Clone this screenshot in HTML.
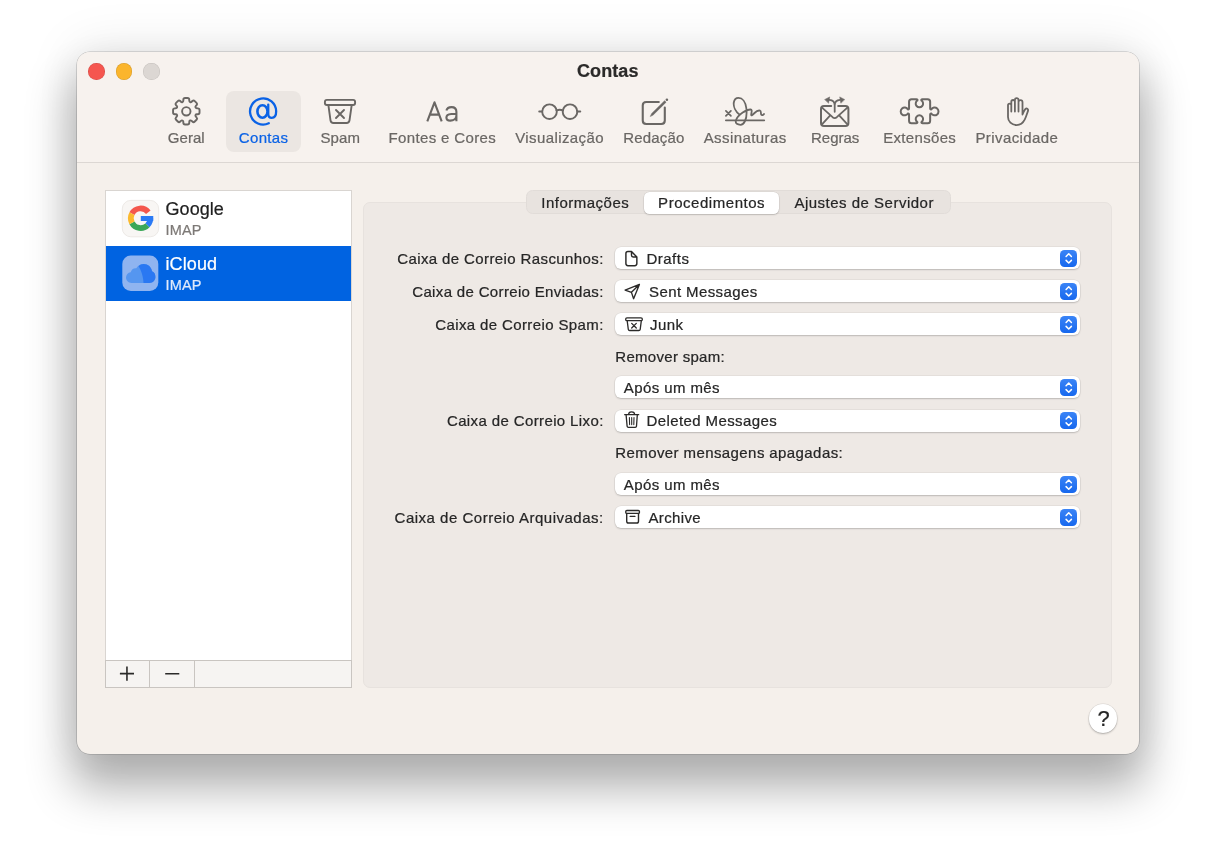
<!DOCTYPE html>
<html lang="pt">
<head>
<meta charset="utf-8">
<title>Contas</title>
<style>
html,body{margin:0;padding:0;}
body{width:1216px;height:856px;overflow:hidden;background:#fff;position:relative;
  font-family:"Liberation Sans",sans-serif;color:#262626;}
*{box-sizing:border-box;}
.abs{position:absolute;}
.t{position:absolute;white-space:nowrap;font-size:15px;line-height:20px;height:20px;-webkit-text-stroke:.22px currentColor;}
/* window */
#win{will-change:transform;position:absolute;left:77px;top:52px;width:1062px;height:702px;border-radius:13px;
  background:#f5f0eb;
  box-shadow:0 0 0 .6px rgba(0,0,0,.24),0 29px 45px 6px rgba(0,0,0,.30),0 -4px 50px 4px rgba(0,0,0,.08);}
#tb{position:absolute;left:0;top:0;width:100%;height:111px;background:#f7f2ee;
  border-radius:13px 13px 0 0;border-bottom:1px solid #dcd7d3;}
.dot{position:absolute;top:11px;width:16.5px;height:16.5px;border-radius:50%;}
#title{left:500px;top:6.5px;font-size:18px;font-weight:bold;color:#2b2a29;letter-spacing:.08px;line-height:24px;height:24px;}
.tl{color:#6a6764;top:76px;transform:translateX(-50%);}
#sel{position:absolute;left:149px;top:39px;width:75px;height:61px;border-radius:8px;background:#ebe6e2;}
/* sidebar */
#list{position:absolute;left:28px;top:138px;width:247px;height:498px;background:#fff;border:1px solid #d9d5d1;}
#row2{position:absolute;left:0;top:55px;width:245px;height:55px;background:#0063e1;}
.an{font-size:18px;line-height:22px;height:22px;left:59.5px;}
.as{font-size:14.5px;line-height:18px;height:18px;left:59.5px;letter-spacing:.19px;}
/* group */
#grp{position:absolute;left:286px;top:150px;width:749px;height:486px;border-radius:7px;background:#eee9e5;border:1px solid #e7e2de;}
#seg{position:absolute;left:448.5px;top:138.25px;width:425px;height:24px;border-radius:6.5px;background:#e8e3df;border:1px solid #e1dcd8;}
#segsel{position:absolute;left:566.5px;top:139.5px;width:135px;height:22.5px;border-radius:5.5px;background:#fff;
  box-shadow:0 0 0 .5px rgba(0,0,0,.08),0 1px 1.5px rgba(0,0,0,.18);}
.pop{position:absolute;left:538px;width:465px;height:22px;border-radius:6px;background:#fff;
  box-shadow:0 0 0 .5px rgba(0,0,0,.07),0 1px 1.8px rgba(0,0,0,.18);}
.pop .t{top:1.5px;}
.step{position:absolute;right:3px;top:2.75px;width:16.6px;height:17px;border-radius:4.5px;
  background:linear-gradient(#3a84f6,#1768ee);}
.lab{text-align:right;}
</style>
</head>
<body>
<div id="win">
  <div id="tb">
    <div class="dot" style="left:11px;background:#f5564f;box-shadow:inset 0 0 0 .5px rgba(0,0,0,.15)"></div>
    <div class="dot" style="left:38.5px;background:#fbb52c;box-shadow:inset 0 0 0 .5px rgba(0,0,0,.15)"></div>
    <div class="dot" style="left:66px;background:#dcd7d3;box-shadow:inset 0 0 0 .5px rgba(0,0,0,.12)"></div>
    <div class="t" id="title">Contas</div>
    <div id="sel"></div>
    <svg class="abs" style="left:-77px;top:-52px" width="1216" height="200" viewBox="0 0 1216 200" fill="none" stroke="#6a6764" stroke-width="1.9" stroke-linecap="round" stroke-linejoin="round">
<!-- gear -->
<path d="M182.49 102.10Q183.29 101.76 183.31 100.76L183.33 99.77Q183.37 98.07 185.07 98.07L187.53 98.07Q189.23 98.07 189.27 99.77L189.29 100.76Q189.31 101.76 190.11 102.10L190.11 102.10Q190.92 102.43 191.64 101.74L192.35 101.05Q193.58 99.87 194.78 101.07L196.53 102.82Q197.73 104.02 196.55 105.25L195.86 105.96Q195.17 106.68 195.50 107.49L195.50 107.49Q195.84 108.29 196.84 108.31L197.83 108.33Q199.53 108.37 199.53 110.07L199.53 112.53Q199.53 114.23 197.83 114.27L196.84 114.29Q195.84 114.31 195.50 115.11L195.50 115.11Q195.17 115.92 195.86 116.64L196.55 117.35Q197.73 118.58 196.53 119.78L194.78 121.53Q193.58 122.73 192.35 121.55L191.64 120.86Q190.92 120.17 190.11 120.50L190.11 120.50Q189.31 120.84 189.29 121.84L189.27 122.83Q189.23 124.53 187.53 124.53L185.07 124.53Q183.37 124.53 183.33 122.83L183.31 121.84Q183.29 120.84 182.49 120.50L182.49 120.50Q181.68 120.17 180.96 120.86L180.25 121.55Q179.02 122.73 177.82 121.53L176.07 119.78Q174.87 118.58 176.05 117.35L176.74 116.64Q177.43 115.92 177.10 115.11L177.10 115.11Q176.76 114.31 175.76 114.29L174.77 114.27Q173.07 114.23 173.07 112.53L173.07 110.07Q173.07 108.37 174.77 108.33L175.76 108.31Q176.76 108.29 177.10 107.49L177.10 107.49Q177.43 106.68 176.74 105.96L176.05 105.25Q174.87 104.02 176.07 102.82L177.82 101.07Q179.02 99.87 180.25 101.05L180.96 101.74Q181.68 102.43 182.49 102.10Z" stroke-linejoin="round"/><circle cx="186.3" cy="111.3" r="4.2"/>
<!-- at -->
<g stroke="#0a62e6" stroke-width="2.3">
<path d="M268.8 123.2A13.05 13.05 0 1 1 276.15 111.3C276.15 115.5 274.3 117.85 271.8 117.85C269.6 117.85 268.25 116.3 268.25 114L268.25 104.6"/>
<ellipse cx="262.45" cy="111.45" rx="5.05" ry="6.25" stroke-width="2.6"/>
</g>
<!-- spam bin -->
<rect x="324.9" y="99.9" width="30.2" height="5.1" rx="2"/>
<path d="M328.4 105.2L330.5 120.4Q330.9 122.95 333.4 122.95L346.6 122.95Q349.1 122.95 349.5 120.4L351.7 105.2"/>
<path d="M336 110L344 118M344 110L336 118"/>
<!-- Aa -->
<g stroke-width="2.1">
<path d="M427.3 121.3L434.5 102.3L441.7 121.3M429.9 114.6L439.1 114.6" stroke-linecap="butt" stroke-linejoin="round"/>
<path d="M446.4 110.6C447 108.2 449 107.1 451.5 107.1C454.6 107.1 456.4 108.8 456.4 111.8L456.4 121.3M456.4 113.7L451.3 113.95C448.2 114.15 446.4 115.3 446.4 117.5C446.4 119.5 448 120.65 450.3 120.65C453.6 120.65 456.4 118.6 456.4 115.5" stroke-linecap="butt"/>
</g>
<!-- glasses -->
<circle cx="549.5" cy="111.7" r="7.3"/><circle cx="570" cy="111.7" r="7.3"/>
<path d="M556.6 110.4Q559.75 109 562.9 110.4M539.2 111.5L542.2 111.5M577.3 111.5L580.3 111.5"/>
<!-- compose -->
<path d="M658.8 101.95L646.25 101.95Q642.75 101.95 642.75 105.45L642.75 120.5Q642.75 124 646.25 124L661.3 124Q664.8 124 664.8 120.5L664.8 107.6" stroke-width="2.1"/>
<path d="M650.4 116.2L651.7 113.5L664.6 100.7L666.1 102.2L653.2 115Z" fill="#6a6764" stroke-width=".5"/>
<circle cx="666.9" cy="99.8" r="1.3" fill="#6a6764" stroke="none"/>
<!-- signature -->
<path d="M725.9 120.35L764.2 120.35"/>
<path d="M725.9 110.8L730.9 115.8M730.9 110.8L725.9 115.8" stroke-width="1.7"/>
<path d="M739.4 114.5C735.5 111.5 733.2 106.5 733.8 102.5C734.3 99.5 736 97.85 738.5 97.85C742.5 97.85 745.5 102 746.3 108C747 114 746.5 118 745 121C743.8 123.5 742 124.8 740.5 124.8C737.5 124.8 735.3 123.5 735.8 121C736.3 118 738.5 115.5 742.7 112.6C745.5 110.8 748 109.4 750.5 109.5C752.5 109.6 751.5 112 751.2 114.5C751 116.5 752.5 115 754.5 113C756.5 111 758.5 110.2 760 110.6C761.5 111 760.5 113.5 761.2 114.6C761.8 115.6 763.2 115.2 764 114" stroke-width="1.8"/>
<!-- envelope -->
<path d="M831.2 106L824 106Q821 106 821 109L821 122.9Q821 125.9 824 125.9L845.4 125.9Q848.4 125.9 848.4 122.9L848.4 109Q848.4 106 845.4 106L838.2 106" stroke-width="2"/>
<path d="M822 107.6L832.6 117.2Q834.7 119 836.8 117.2L847.4 107.6M822.2 124.2L830 115.6M847.2 124.2L839.4 115.6" stroke-width="1.8"/>
<path d="M834.7 111.8L834.7 105.5C834.7 102 832.5 100.1 829.3 99.9M834.7 105.5C834.7 102 836.9 100.1 840.1 99.9" stroke-width="1.8"/>
<path d="M824.9 99.4L829.7 96.9L828.6 102.9ZM844.5 99.4L839.7 96.9L840.8 102.9Z" fill="#6a6764" stroke-width=".5"/>
<!-- puzzle -->
<path d="M909.05 101.75Q909.05 99.25 911.55 99.25L916.4 99.25Q917.9 99.4 917.4 100.45A3.7 3.7 0 1 0 921.4 100.45Q920.9 99.4 922.4 99.25L927.65 99.25Q930.15 99.25 930.15 101.75L930.15 108.2Q930.2 109.8 931.3 109.37A3.9 3.9 0 1 1 931.3 113.53Q930.2 113.1 930.15 114.7L930.15 120.7Q930.15 123.2 927.65 123.2L922.6 123.2Q921 123.05 921.5 122.05A3.7 3.7 0 1 0 917.3 122.05Q917.8 123.05 916.2 123.2L911.55 123.2Q909.05 123.2 909.05 120.7L909.05 114.7Q909 113.1 907.9 113.53A3.9 3.9 0 1 1 907.9 109.37Q909 109.8 909.05 108.2Z" stroke-width="2"/>
<!-- hand -->
<path d="M1008 117L1008 105.2A1.65 1.65 0 0 1 1011.3 105.2L1011.3 111.5M1011.3 105L1011.3 101.8A1.8 1.8 0 0 1 1014.9 101.8L1014.9 111.5M1014.9 101.8L1014.9 99.9A1.8 1.8 0 0 1 1018.5 99.9L1018.5 111.5M1018.5 102.2A2 2 0 0 1 1022.5 102.2L1022.5 114.5C1023.3 112.4 1024.3 110.3 1025.3 109.1C1026.6 107.8 1028.6 108.9 1028 110.9C1027 113.7 1026.1 117 1024.7 119.7C1023 123 1020.2 125.05 1016.65 125.05C1011.5 125.05 1008 121.5 1008 117" stroke-width="1.8"/>
</svg>
    <div class="t tl" style="left:109.25px;letter-spacing:.06px">Geral</div>
    <div class="t tl" style="left:186.6px;letter-spacing:.35px;color:#0a62e6">Contas</div>
    <div class="t tl" style="left:263.3px;letter-spacing:.1px">Spam</div>
    <div class="t tl" style="left:365.3px;letter-spacing:.36px">Fontes e Cores</div>
    <div class="t tl" style="left:482.6px;letter-spacing:.4px">Visualização</div>
    <div class="t tl" style="left:576.85px;letter-spacing:.18px">Redação</div>
    <div class="t tl" style="left:668.2px;letter-spacing:.42px">Assinaturas</div>
    <div class="t tl" style="left:758.2px;letter-spacing:0">Regras</div>
    <div class="t tl" style="left:842.7px;letter-spacing:.32px">Extensões</div>
    <div class="t tl" style="left:939.9px;letter-spacing:.41px">Privacidade</div>
  </div>

  <div id="list">
    <div class="t an" style="top:7px;color:#1f1f1f;letter-spacing:.06px">Google</div>
    <div class="t as" style="top:29.5px;color:#7d7976">IMAP</div>
    <div id="row2">
      <div class="t an" style="top:7px;color:#fff;letter-spacing:.1px">iCloud</div>
      <div class="t as" style="top:29.5px;color:#dfe9fb">IMAP</div>
    </div>
    <div class="abs" style="left:-1px;bottom:-1px;width:247px;height:28.3px;background:#f6f4f2;border:1px solid #c9c5c1;"></div>
    <div class="abs" style="left:42.5px;bottom:0;width:1px;height:26.5px;background:#c9c5c1"></div>
    <div class="abs" style="left:88px;bottom:0;width:1px;height:26.5px;background:#c9c5c1"></div>
    <svg class="abs" style="left:-106px;top:-191px" width="400" height="700" viewBox="0 0 400 700" fill="none">
<rect x="122.3" y="200.4" width="36.4" height="36.4" rx="8.5" fill="#f8f6f4" stroke="#e9e5e1" stroke-width=".8"/>
<g stroke-width="5.7" fill="none">
<path d="M148.32 212.22A9.8 9.8 0 0 0 131.95 213.65" stroke="#f4574d"/>
<path d="M131.95 222.85A9.8 9.8 0 0 0 147.53 225.18" stroke="#3aa757"/>
<path d="M131.95 213.65A9.8 9.8 0 0 0 131.95 222.85" stroke="#fbb92e"/>
<path d="M147.53 225.18A9.8 9.8 0 0 0 150.4 218.5" stroke="#2a7af5"/>
</g>
<rect x="140.8" y="216" width="12.45" height="5" fill="#2a7af5"/>
<rect x="122.3" y="255.5" width="36" height="35.5" rx="8.5" fill="#8fb4f0"/>
<path d="M131.6 283C128.4 283 126 280.6 126 277.6C126 274.9 128 272.7 130.7 272.3C131.3 269.6 133.7 267.9 136.3 268.3C137.8 265.6 140.5 263.9 143.7 263.9C148 263.9 151.5 267.1 152 271.3C154.6 272.1 155.4 274.5 155.4 277.1C155.4 280.4 152.8 283 149.5 283Z" fill="#5596f0"/>
<path d="M143.7 263.9C148 263.9 151.5 267.1 152 271.3C154.6 272.1 155.4 274.5 155.4 277.1C155.4 280.4 152.8 283 149.5 283L143.5 283C143.5 277 141 270 138.5 266C139.9 264.7 141.7 263.9 143.7 263.9Z" fill="#2a78f2"/>
<path d="M119.9 673.65L134 673.65M126.95 666.6L126.95 680.7M165.2 673.75L179.3 673.75" stroke="#2b2a29" stroke-width="1.6" stroke-linecap="butt"/>
</svg>
  </div>

  <div id="grp"></div>
  <div id="seg"></div>
  <div id="segsel"></div>
  <div class="t" style="left:464.25px;top:140.5px;letter-spacing:.5px">Informações</div>
  <div class="t" style="left:581.1px;top:140.5px;letter-spacing:.54px">Procedimentos</div>
  <div class="t" style="left:717.4px;top:140.5px;letter-spacing:.5px">Ajustes de Servidor</div>

  <div class="t lab" style="right:535.3px;top:196.5px;letter-spacing:.39px">Caixa de Correio Rascunhos:</div>
  <div class="t lab" style="right:535.3px;top:229.5px;letter-spacing:.34px">Caixa de Correio Enviadas:</div>
  <div class="t lab" style="right:535.3px;top:262.5px;letter-spacing:.38px">Caixa de Correio Spam:</div>
  <div class="t lab" style="right:535.3px;top:359px;letter-spacing:.38px">Caixa de Correio Lixo:</div>
  <div class="t lab" style="right:535.3px;top:455.5px;letter-spacing:.5px">Caixa de Correio Arquivadas:</div>
  <div class="t" style="left:538.25px;top:294.5px;letter-spacing:.3px">Remover spam:</div>
  <div class="t" style="left:538.25px;top:390.5px;letter-spacing:.41px">Remover mensagens apagadas:</div>

  <div class="pop" style="top:195px"><div class="t" style="left:31.5px;letter-spacing:.48px">Drafts</div><div class="step"></div></div>
  <div class="pop" style="top:228px"><div class="t" style="left:34px;letter-spacing:.4px">Sent Messages</div><div class="step"></div></div>
  <div class="pop" style="top:261px"><div class="t" style="left:35px;letter-spacing:.4px">Junk</div><div class="step"></div></div>
  <div class="pop" style="top:324.25px"><div class="t" style="left:8.75px;letter-spacing:.41px">Após um mês</div><div class="step"></div></div>
  <div class="pop" style="top:357.5px"><div class="t" style="left:31.5px;letter-spacing:.4px">Deleted Messages</div><div class="step"></div></div>
  <div class="pop" style="top:421.25px"><div class="t" style="left:8.75px;letter-spacing:.41px">Após um mês</div><div class="step"></div></div>
  <div class="pop" style="top:454px"><div class="t" style="left:33.5px;letter-spacing:.35px">Archive</div><div class="step"></div></div>

  <svg class="abs" style="left:-77px;top:-52px" width="1216" height="600" viewBox="0 0 1216 600" fill="none" stroke="#2b2a29" stroke-width="1.45" stroke-linecap="round" stroke-linejoin="round">
<!-- doc -->
<path d="M631.5 251.4L628 251.4Q625.9 251.4 625.9 253.5L625.9 263.6Q625.9 265.7 628 265.7L634.75 265.7Q636.85 265.7 636.85 263.6L636.85 256.9L631.5 251.4ZM631.5 251.7L631.5 255.3Q631.5 256.9 633.1 256.9L636.6 256.9"/>
<!-- plane -->
<path d="M639.4 284.4L625.1 290.1L631.45 292.35L633.6 298.7ZM631.45 292.35L639.4 284.4" stroke-width="1.35"/>
<!-- junk -->
<rect x="625.7" y="317.8" width="16.6" height="2.9" rx="1.3" stroke-width="1.3"/>
<path d="M627.2 320.9L628.3 329.3Q628.5 330.5 629.7 330.5L638.8 330.5Q640 330.5 640.2 329.3L641.3 320.9" stroke-width="1.3"/>
<path d="M631.7 323.4L636.3 328M636.3 323.4L631.7 328" stroke-width="1.3"/>
<!-- trash -->
<path d="M624.7 414.7L638.7 414.7M628.6 414.5C628.6 412.3 630 411.8 631.6 411.8C633.2 411.8 634.6 412.3 634.6 414.5M626.1 414.9L627.1 426.1Q627.2 427.3 628.4 427.3L635.2 427.3Q636.4 427.3 636.5 426.1L637.3 414.9" stroke-width="1.3"/>
<path d="M629.4 417.6L629.6 424.6M631.7 417.6L631.7 424.6M634 417.6L633.8 424.6" stroke-width="1.1"/>
<!-- archive -->
<rect x="625.7" y="510.5" width="13.8" height="2.9" rx="1.2" stroke-width="1.3"/>
<path d="M626.7 513.5L626.7 521.2Q626.7 523.05 628.5 523.05L636.7 523.05Q638.5 523.05 638.5 521.2L638.5 513.5M630.2 516.4L634.9 516.4" stroke-width="1.4"/>
<!-- chevrons -->
<g stroke="#fff" stroke-width="1.5">
<path d="M1066.1 256.45L1068.75 253.75L1071.4 256.45M1066.1 260.35L1068.75 263.05L1071.4 260.35"/>
<path d="M1066.1 289.45L1068.75 286.75L1071.4 289.45M1066.1 293.35L1068.75 296.05L1071.4 293.35"/>
<path d="M1066.1 322.45L1068.75 319.75L1071.4 322.45M1066.1 326.35L1068.75 329.05L1071.4 326.35"/>
<path d="M1066.1 385.70L1068.75 383.00L1071.4 385.70M1066.1 389.60L1068.75 392.30L1071.4 389.60"/>
<path d="M1066.1 418.95L1068.75 416.25L1071.4 418.95M1066.1 422.85L1068.75 425.55L1071.4 422.85"/>
<path d="M1066.1 482.70L1068.75 480.00L1071.4 482.70M1066.1 486.60L1068.75 489.30L1071.4 486.60"/>
<path d="M1066.1 515.45L1068.75 512.75L1071.4 515.45M1066.1 519.35L1068.75 522.05L1071.4 519.35"/>
</g>
</svg>
  <div class="abs" id="help" style="left:1012.1px;top:652.3px;width:28.4px;height:28.4px;border-radius:50%;background:#fff;
     box-shadow:0 0 0 .5px rgba(0,0,0,.1),0 1px 2px rgba(0,0,0,.25);"></div>
  <div class="t" style="left:1020.6px;top:654.3px;font-size:22px;line-height:26px;height:26px;color:#262626">?</div>
</div>
</body>
</html>
